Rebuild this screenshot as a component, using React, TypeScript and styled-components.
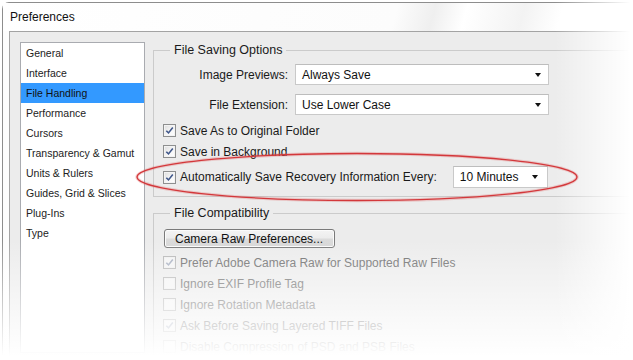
import styled, { createGlobalStyle } from 'styled-components';

const GlobalStyle = createGlobalStyle`
  html, body {
    margin: 0;
    padding: 0;
    background: #fff;
  }
  body {
    font-family: 'Liberation Sans', Arial, sans-serif;
    color: #1a1a1a;
  }
`;

const categories = [
  'General',
  'Interface',
  'File Handling',
  'Performance',
  'Cursors',
  'Transparency & Gamut',
  'Units & Rulers',
  'Guides, Grid & Slices',
  'Plug-Ins',
  'Type',
];

const compatibility = [
  { label: 'Prefer Adobe Camera Raw for Supported Raw Files', checked: true },
  { label: 'Ignore EXIF Profile Tag', checked: false },
  { label: 'Ignore Rotation Metadata', checked: false },
  { label: 'Ask Before Saving Layered TIFF Files', checked: true },
  { label: 'Disable Compression of PSD and PSB Files', checked: false },
];

type CheckProps = { checked: boolean; disabled?: boolean };

const Checkbox = ({ checked, disabled }: CheckProps) => (
  <CheckBox $disabled={disabled}>
    {checked && (
      <svg width="9" height="9" viewBox="0 0 9 9">
        <path
          d="M1.3 4.7 L3.5 6.9 L7.8 1.6"
          fill="none"
          stroke={disabled ? '#a9b1c2' : '#41588a'}
          strokeWidth="1.6"
        />
      </svg>
    )}
  </CheckBox>
);

const Select = ({ value, width }: { value: string; width: number }) => (
  <SelectBox $width={width}>
    <span>{value}</span>
    <Arrow />
  </SelectBox>
);

const App = () => {
  return (
    <Window>
      <GlobalStyle />
      <Frame>
        <TitleBar>Preferences</TitleBar>
        <Client>
          <CategoryList>
            {categories.map((c) => (
              <CategoryItem key={c} $selected={c === 'File Handling'}>
                {c}
              </CategoryItem>
            ))}
          </CategoryList>

          <Panel>
            <Group>
              <Legend>File Saving Options</Legend>
              <GroupBody>
                <FieldRow>
                  <FieldLabel>Image Previews:</FieldLabel>
                  <Select value="Always Save" width={254} />
                </FieldRow>
                <FieldRow>
                  <FieldLabel>File Extension:</FieldLabel>
                  <Select value="Use Lower Case" width={254} />
                </FieldRow>
                <CheckRow $top={5}>
                  <Checkbox checked />
                  <span>Save As to Original Folder</span>
                </CheckRow>
                <CheckRow>
                  <Checkbox checked />
                  <span>Save in Background</span>
                </CheckRow>
                <AutoSaveRow>
                  <Checkbox checked />
                  <span>Automatically Save Recovery Information Every:</span>
                  <AutoSelect>
                    <Select value="10 Minutes" width={95} />
                  </AutoSelect>
                </AutoSaveRow>
              </GroupBody>
            </Group>

            <Group $spaced>
              <Legend>File Compatibility</Legend>
              <GroupBody $compat>
                <PushButton>Camera Raw Preferences...</PushButton>
                {compatibility.map((item, i) => (
                  <CheckRow key={item.label} $top={i === 0 ? 4 : 0} $disabled>
                    <Checkbox checked={item.checked} disabled />
                    <span>{item.label}</span>
                  </CheckRow>
                ))}
              </GroupBody>
            </Group>
          </Panel>
        </Client>
      </Frame>

      <Fade />

      <Highlight width="633" height="360" viewBox="0 0 633 360">
        <ellipse
          cx="357"
          cy="177"
          rx="220"
          ry="23.5"
          fill="none"
          stroke="rgba(225, 90, 90, 0.25)"
          strokeWidth="3.5"
        />
        <ellipse
          cx="357"
          cy="177"
          rx="220"
          ry="23.5"
          fill="none"
          stroke="#d3383b"
          strokeWidth="1.3"
        />
      </Highlight>
    </Window>
  );
};

export default App;

const Window = styled.div`
  position: relative;
  width: 633px;
  height: 360px;
  overflow: hidden;
  padding: 2px 0 0 2px;
  box-sizing: border-box;
  background: #fff;
`;

const Frame = styled.div`
  height: 100%;
  display: flex;
  flex-direction: column;
  border-left: 1px solid #8d8d8d;
  border-top: 1px solid #8d8d8d;
  border-top-left-radius: 7px;
  background: #fdfdfd;
`;

const TitleBar = styled.div`
  height: 28px;
  line-height: 28px;
  padding-left: 7px;
  font-size: 12px;
  color: #111;
  background: linear-gradient(
    105deg,
    #ffffff 0%,
    #fcfcfc 62%,
    #efefef 68%,
    #ffffff 73%,
    #f3f3f3 82%,
    #ffffff 88%
  );
`;

const Client = styled.div`
  flex: 1;
  display: flex;
  gap: 8px;
  margin-left: 6px;
  padding: 10px 0 0 10px;
  border-top: 1px solid #a3a3a3;
  border-left: 1px solid #a3a3a3;
  background: #ececec;
  min-height: 0;
`;

const CategoryList = styled.ul`
  list-style: none;
  margin: 0 0 8px;
  padding: 0;
  width: 123px;
  flex: none;
  border: 1px solid #a9abb0;
  background: #fff;
`;

const CategoryItem = styled.li<{ $selected?: boolean }>`
  height: 20px;
  line-height: 20px;
  padding-left: 5px;
  font-size: 10.5px;
  color: ${(p) => (p.$selected ? '#111' : '#222')};
  background: ${(p) => (p.$selected ? '#3399ff' : 'transparent')};
  white-space: nowrap;
`;

const Panel = styled.div`
  flex: none;
  width: 520px;
  display: flex;
  flex-direction: column;
`;

const Group = styled.fieldset<{ $spaced?: boolean }>`
  margin: ${(p) => (p.$spaced ? '8px' : '0')} 0 0;
  padding: 0;
  border: 1px solid #cbcbcb;
  min-width: 0;
`;

const Legend = styled.legend`
  margin-left: 16px;
  padding: 0 4px;
  font-size: 12.5px;
  line-height: 16px;
  color: #1a1a1a;
`;

const GroupBody = styled.div<{ $compat?: boolean }>`
  display: flex;
  flex-direction: column;
  padding: ${(p) => (p.$compat ? '8px 0 0 9px' : '6px 0 8px 9px')};
  font-size: 12px;
`;

const FieldRow = styled.div`
  display: grid;
  grid-template-columns: 125px auto;
  column-gap: 7px;
  align-items: center;
  height: 21px;

  & + & {
    margin-top: 9px;
  }
`;

const FieldLabel = styled.span`
  text-align: right;
  white-space: nowrap;
`;

const SelectBox = styled.div<{ $width: number }>`
  width: ${(p) => p.$width}px;
  height: 21px;
  box-sizing: border-box;
  display: flex;
  align-items: center;
  justify-content: space-between;
  padding: 0 6px 0 6px;
  border: 1px solid #c9c9c9;
  border-top-color: #bdbdbd;
  background: #fff;
  font-size: 12px;
  color: #111;
`;

const Arrow = styled.span`
  width: 0;
  height: 0;
  border-left: 3.5px solid transparent;
  border-right: 3.5px solid transparent;
  border-top: 4px solid #111;
  margin-right: 1px;
`;

const CheckRow = styled.div<{ $top?: number; $disabled?: boolean }>`
  display: flex;
  align-items: center;
  gap: 4px;
  height: 21px;
  margin-top: ${(p) => p.$top ?? 0}px;
  color: ${(p) => (p.$disabled ? '#6d6d6d' : '#1a1a1a')};
  white-space: nowrap;
`;

const AutoSaveRow = styled.div`
  display: flex;
  align-items: center;
  gap: 4px;
  height: 22px;
  margin-top: 4px;
  white-space: nowrap;
`;

const AutoSelect = styled.div`
  margin-left: 12px;

  & > div {
    height: 22px;
    padding-right: 8px;
  }
`;

const CheckBox = styled.span<{ $disabled?: boolean }>`
  flex: none;
  width: 13px;
  height: 13px;
  box-sizing: border-box;
  display: inline-flex;
  align-items: center;
  justify-content: center;
  border: 1px solid ${(p) => (p.$disabled ? '#b7b7b7' : '#8e8f8f')};
  background: ${(p) =>
    p.$disabled
      ? '#f4f4f4'
      : 'linear-gradient(135deg, #dcdcdc 0%, #f6f6f6 55%, #ffffff 100%)'};
  box-shadow: inset 0 0 0 1px ${(p) => (p.$disabled ? '#f0f0f0' : '#f3f3f3')};
`;

const PushButton = styled.button`
  align-self: flex-start;
  width: 171px;
  height: 19px;
  margin: 0 0 0 1px;
  padding: 0 0 0 10px;
  text-align: left;
  font-family: inherit;
  font-size: 12px;
  color: #111;
  border: 1px solid #7a7a7a;
  border-radius: 3px;
  background: linear-gradient(#f4f4f4 0%, #ececec 48%, #dcdcdc 52%, #d6d6d6 100%);
  box-shadow: inset 0 0 0 1px #fbfbfb;
`;

const Fade = styled.div`
  position: absolute;
  inset: 0;
  pointer-events: none;
  background:
    linear-gradient(to right, rgba(255, 255, 255, 0) 555px, #fff 630px),
    linear-gradient(to bottom, rgba(255, 255, 255, 0) 240px, #fff 356px);
`;

const Highlight = styled.svg`
  position: absolute;
  left: 0;
  top: 0;
  pointer-events: none;
`;
